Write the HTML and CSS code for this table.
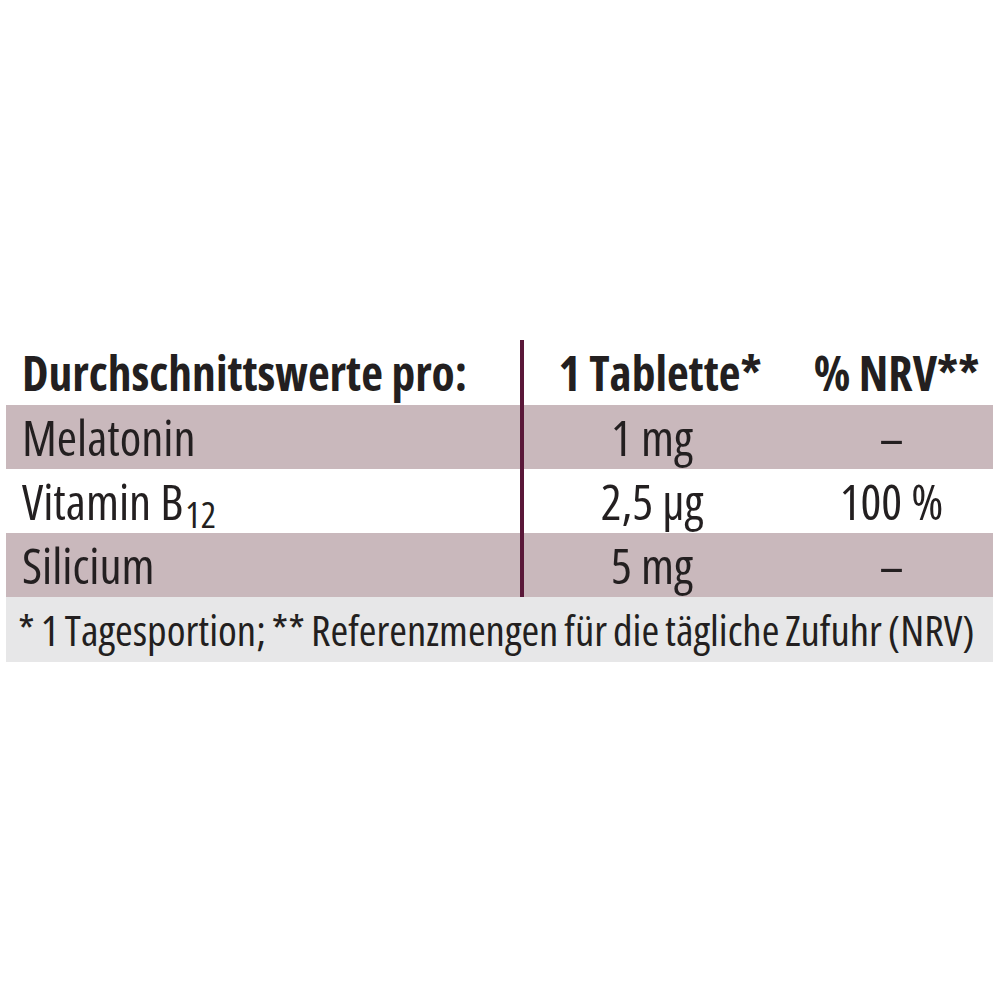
FILE: index.html
```html
<!DOCTYPE html>
<html lang="de">
<head>
<meta charset="utf-8">
<title>Nährwerte</title>
<link rel="stylesheet" href="styles.css">
</head>
<body>
<div class="page">
  <div class="table">
    <div class="row head">
      <div class="c1">Durchschnittswerte pro:</div>
      <div class="c2">1 Tablette*</div>
      <div class="c3">% NRV**</div>
    </div>
    <div class="row band">
      <div class="c1">Melatonin</div>
      <div class="c2">1 mg</div>
      <div class="c3">–</div>
    </div>
    <div class="row">
      <div class="c1">Vitamin B<sub class="sub">12</sub></div>
      <div class="c2">2,5 µg</div>
      <div class="c3">100 %</div>
    </div>
    <div class="row band">
      <div class="c1">Silicium</div>
      <div class="c2">5 mg</div>
      <div class="c3">–</div>
    </div>
    <div class="foot">* 1 Tagesportion; ** Referenzmengen für die tägliche Zufuhr (NRV)</div>
  </div>
</div>
</body>
</html>
```
FILE: styles.css
```css
html, body {
  margin: 0;
  padding: 0;
  background: #ffffff;
}
.page {
  width: 1000px;
  height: 1000px;
  padding-top: 340px;
  box-sizing: border-box;
  font-family: "Open Sans", "Liberation Sans", sans-serif;
  font-stretch: 75%;
  color: #231f20;
}
.table {
  margin-left: 6px;
  width: 987px;
}
.row {
  display: grid;
  grid-template-columns: 514px 260px 1fr;
  height: 64px;
  font-size: 49px;
  line-height: 64px;
}
.row.head {
  height: 65px;
  font-size: 47.5px;
  font-weight: bold;
  line-height: 66px;
}
.band {
  background: #c9b8bc;
}
.c1 {
  padding-left: 16px;
  white-space: nowrap;
}
.c2 {
  border-left: 4px solid #5a1839;
  text-align: center;
  white-space: nowrap;
}
.head .c2 {
  padding-left: 16px;
}
.c3 {
  padding-left: 10px;
  text-align: center;
  white-space: nowrap;
}
.head .c3 {
  padding-left: 20px;
}
.sub {
  font-size: 36px;
  vertical-align: -8px;
  line-height: 0;
  margin-left: 2px;
}
.foot {
  height: 65px;
  background: #e7e7e8;
  font-size: 42.8px;
  line-height: 66px;
  padding-left: 12px;
  white-space: nowrap;
  word-spacing: -2px;
}
```
